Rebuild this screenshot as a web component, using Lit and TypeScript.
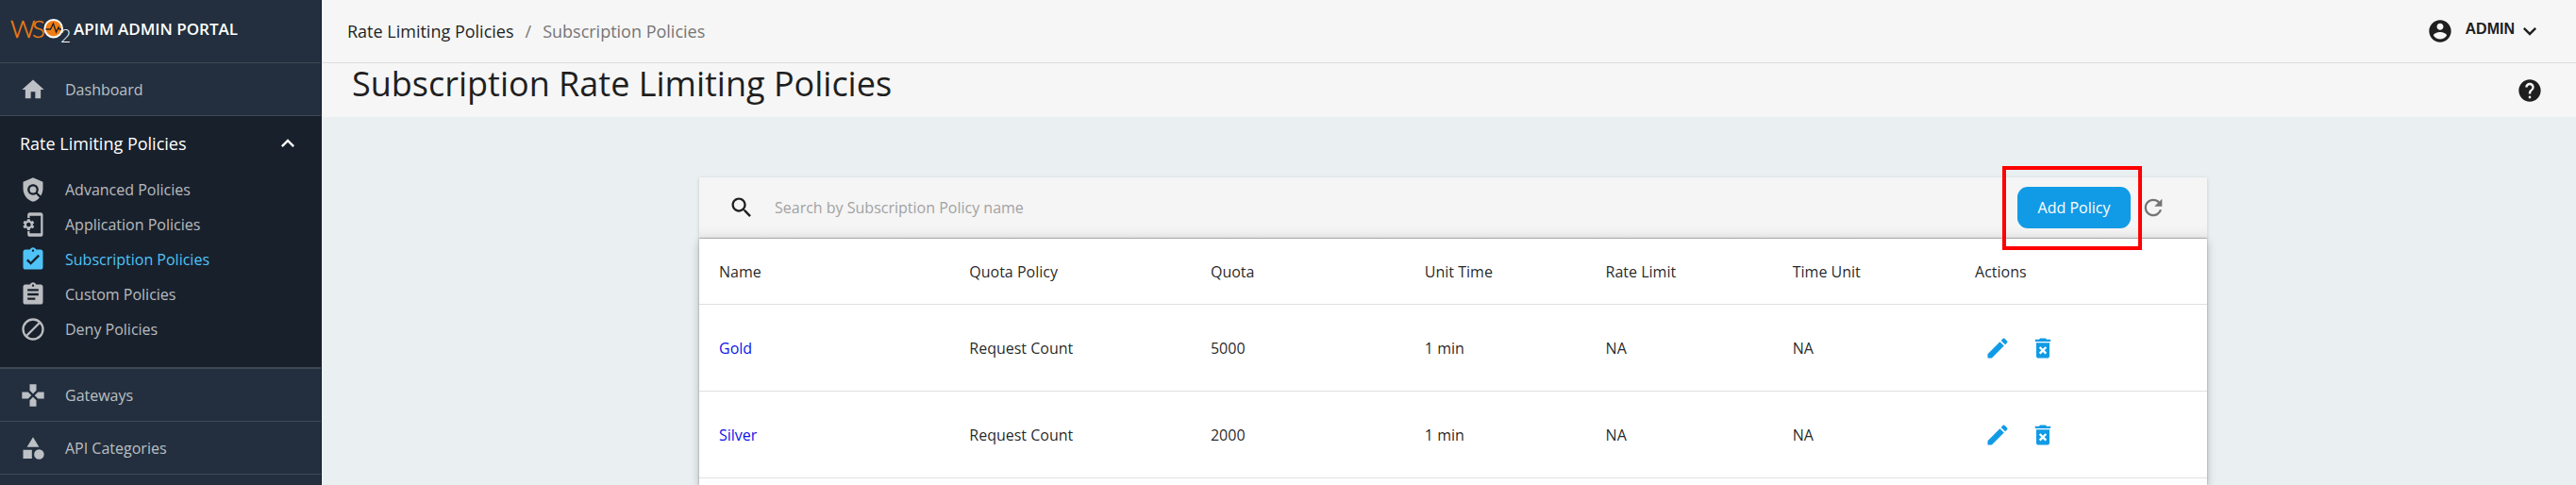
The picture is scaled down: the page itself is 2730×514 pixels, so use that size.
import { LitElement, html, css, svg } from "lit";
import { customElement } from "lit/decorators.js";
import { classMap } from "lit/directives/class-map.js";

const paths = {
  home: svg`<path d="M10 20v-6h4v6h5v-8h3L12 3 2 12h3v8z"/>`,
  policy: svg`<path d="M21 5l-9-4-9 4v6c0 5.55 3.84 10.74 9 12 2.3-.56 4.33-1.9 5.88-3.71l-3.12-3.12c-1.94 1.29-4.58 1.07-6.29-.64-1.95-1.95-1.95-5.12 0-7.07 1.95-1.95 5.12-1.95 7.07 0 1.71 1.71 1.92 4.35.64 6.29l2.9 2.9C20.29 15.69 21 13.38 21 11V5z"/><circle cx="12" cy="12" r="3"/>`,
  setup: svg`<path d="M11.8 12.5v-1l1.1-.8c.1-.1.1-.2.1-.3l-1-1.7c-.1-.1-.2-.2-.3-.1l-1.3.4c-.3-.2-.6-.4-.9-.5l-.2-1.3c0-.1-.1-.2-.3-.2H7c-.1 0-.2.1-.3.3l-.2 1.3c-.3.1-.6.3-.9.5l-1.3-.5c-.1 0-.2 0-.3.1l-1 1.7c-.1.1 0 .2.1.3l1.1.8v1l-1.1.8c-.1.2-.1.3-.1.4l1 1.7c.1.1.2.2.3.1l1.4-.4c.3.2.6.4.9.5l.2 1.3c-.1.1.1.2.2.2h2c.1 0 .2-.1.3-.3l.2-1.3c.3-.1.6-.3.9-.5l1.3.5c.1 0 .2 0 .3-.1l1-1.7c.1-.1 0-.2-.1-.3l-1.1-.9zM8 14c-1.1 0-2-.9-2-2s.9-2 2-2 2 .9 2 2-.9 2-2 2zM19 1H9c-1.1 0-2 .9-2 2v3h2V4h10v16H9v-2H7v3c0 1.1.9 2 2 2h10c1.1 0 2-.9 2-2V3c0-1.1-.9-2-2-2z"/>`,
  assignmentDone: svg`<path d="M19 3h-4.18C14.4 1.84 13.3 1 12 1c-1.3 0-2.4.84-2.82 2H5c-1.1 0-2 .9-2 2v14c0 1.1.9 2 2 2h14c1.1 0 2-.9 2-2V5c0-1.1-.9-2-2-2zm-7 0c.55 0 1 .45 1 1s-.45 1-1 1-1-.45-1-1 .45-1 1-1zm-2 14l-4-4 1.41-1.41L10 14.17l6.59-6.59L18 9l-8 8z"/>`,
  assignment: svg`<path d="M19 3h-4.18C14.4 1.84 13.3 1 12 1c-1.3 0-2.4.84-2.82 2H5c-1.1 0-2 .9-2 2v14c0 1.1.9 2 2 2h14c1.1 0 2-.9 2-2V5c0-1.1-.9-2-2-2zm-7 0c.55 0 1 .45 1 1s-.45 1-1 1-1-.45-1-1 .45-1 1-1zm2 14H7v-2h7v2zm3-4H7v-2h10v2zm0-4H7V7h10v2z"/>`,
  deny: svg`<path d="M6.4 17.6L17.6 6.4" fill="none" stroke="currentColor" stroke-width="2"/><circle cx="12" cy="12" r="9" fill="none" stroke="currentColor" stroke-width="2"/>`,
  gamepad: svg`<path d="M15 7.5V2H9v5.5l3 3 3-3zM7.5 9H2v6h5.5l3-3-3-3zM9 16.5V22h6v-5.5l-3-3-3 3zM16.5 9l-3 3 3 3H22V9h-5.5z"/>`,
  category: svg`<path d="M12 2l-5.5 9h11zM3 13.5h8v8H3z"/><circle cx="17.5" cy="17.5" r="4.5"/>`,
  expandLess: svg`<path d="M12 8l-6 6 1.41 1.41L12 10.83l4.59 4.58L18 14z"/>`,
  expandMore: svg`<path d="M16.59 8.59L12 13.17 7.41 8.59 6 10l6 6 6-6z"/>`,
  account: svg`<path d="M12 2C6.48 2 2 6.48 2 12s4.48 10 10 10 10-4.48 10-10S17.52 2 12 2zm0 3c1.66 0 3 1.34 3 3s-1.34 3-3 3-3-1.34-3-3 1.34-3 3-3zm0 14.2c-2.5 0-4.71-1.28-6-3.22.03-1.99 4-3.08 6-3.08 1.99 0 5.97 1.09 6 3.08-1.29 1.94-3.5 3.22-6 3.22z"/>`,
  help: svg`<path d="M12 2C6.48 2 2 6.48 2 12s4.48 10 10 10 10-4.48 10-10S17.52 2 12 2zm1 17h-2v-2h2v2zm2.07-7.75l-.9.92C13.45 12.9 13 13.5 13 15h-2v-.5c0-1.1.45-2.1 1.17-2.83l1.24-1.26c.37-.36.59-.86.59-1.41 0-1.1-.9-2-2-2s-2 .9-2 2H8c0-2.21 1.79-4 4-4s4 1.79 4 4c0 .88-.36 1.68-.93 2.25z"/>`,
  search: svg`<path d="M15.5 14h-.79l-.28-.27C15.41 12.59 16 11.11 16 9.5 16 5.91 13.09 3 9.5 3S3 5.91 3 9.5 5.91 16 9.5 16c1.61 0 3.09-.59 4.23-1.57l.27.28v.79l5 4.99L20.49 19l-4.99-5zm-6 0C7.01 14 5 11.99 5 9.5S7.01 5 9.5 5 14 7.01 14 9.5 11.99 14 9.5 14z"/>`,
  refresh: svg`<path d="M17.65 6.35C16.2 4.9 14.21 4 12 4c-4.42 0-7.99 3.58-7.99 8s3.57 8 7.99 8c3.73 0 6.84-2.55 7.73-6h-2.08c-.82 2.33-3.04 4-5.65 4-3.31 0-6-2.69-6-6s2.69-6 6-6c1.66 0 3.14.69 4.22 1.78L13 11h7V4l-2.35 2.35z"/>`,
  edit: svg`<path d="M3 17.25V21h3.75L17.81 9.94l-3.75-3.75L3 17.25zM20.71 7.04c.39-.39.39-1.02 0-1.41l-2.34-2.34c-.39-.39-1.02-.39-1.41 0l-1.83 1.83 3.75 3.75 1.83-1.83z"/>`,
  remove: svg`<path d="M6 19c0 1.1.9 2 2 2h8c1.1 0 2-.9 2-2V7H6v12zm2.46-7.12l1.41-1.41L12 12.59l2.12-2.12 1.41 1.41L13.41 14l2.12 2.12-1.41 1.41L12 15.41l-2.12 2.12-1.41-1.41L10.59 14l-2.13-2.12zM15.5 4l-1-1h-5l-1 1H5v2h14V4z"/>`,
};

type IconName = keyof typeof paths;

const icon = (name: IconName) =>
  html`<svg class="icon" viewBox="0 0 24 24" aria-hidden="true">${paths[name]}</svg>`;

const shared = css`
  :host {
    box-sizing: border-box;
    font-family: "Open Sans", "Noto Sans", sans-serif;
    font-size: 16px;
    line-height: 24px;
  }
  *,
  *::before,
  *::after {
    box-sizing: border-box;
  }
  a {
    color: inherit;
    text-decoration: none;
  }
  button {
    margin: 0;
    padding: 0;
    border: 0;
    background: none;
    color: inherit;
    font: inherit;
    cursor: pointer;
  }
  .icon {
    display: block;
    flex: none;
    width: 28px;
    height: 28px;
    fill: currentColor;
  }
`;

interface NavItem {
  label: string;
  icon: IconName;
  active?: boolean;
}

@customElement("side-nav")
class SideNav extends LitElement {
  static styles = [
    shared,
    css`
      :host {
        display: block;
        background: #232f3e;
        border-right: 1px solid #18202c;
        color: rgba(255, 255, 255, 0.7);
      }
      .brand {
        display: flex;
        align-items: center;
        height: 67px;
        padding: 0 8px 4px;
        border-bottom: 1px solid #404854;
        color: #fff;
        font-size: 17px;
        font-weight: 600;
      }
      .logo {
        flex: none;
        width: 70px;
        height: 40px;
        font-family: Lato, sans-serif;
        font-weight: 300;
      }
      .item {
        display: flex;
        align-items: center;
        gap: 20px;
        height: 56px;
        padding: 0 21px;
        border-bottom: 1px solid #404854;
      }
      .group {
        padding-bottom: 22px;
        background: #18202c;
        border-bottom: 2px solid #404854;
      }
      .group-head {
        display: flex;
        align-items: center;
        justify-content: space-between;
        width: 100%;
        height: 59px;
        padding: 0 21px 2px;
        color: #fff;
        font-size: 18px;
      }
      .group .item {
        height: 37px;
        border: 0;
      }
      .group .active {
        color: #4fc3f7;
      }
    `,
  ];

  private policies: NavItem[] = [
    { label: "Advanced Policies", icon: "policy" },
    { label: "Application Policies", icon: "setup" },
    { label: "Subscription Policies", icon: "assignmentDone", active: true },
    { label: "Custom Policies", icon: "assignment" },
    { label: "Deny Policies", icon: "deny" },
  ];

  private item(entry: NavItem) {
    return html`<a
      class=${classMap({ item: true, active: !!entry.active })}
      href="#"
      >${icon(entry.icon)}<span>${entry.label}</span></a
    >`;
  }

  render() {
    return html`
      <a class="brand" href="#">
        <svg class="logo" viewBox="-3 -6 70 40" role="img" aria-label="WSO2">
          <g fill="#f07d14" stroke="#f07d14" stroke-width="0.4" font-size="26">
            <text x="0" y="23">W</text>
            <text x="23" y="23">S</text>
          </g>
          <circle cx="45.7" cy="13.2" r="9.3" fill="#f07d14" stroke="#fff" stroke-width="2" />
          <path
            d="M37.5 14h5l3-6 3 9 2.5-5 1 2h2"
            fill="none"
            stroke="#18202c"
            stroke-width="1.3"
          />
          <text x="53" y="28" font-size="19" fill="#fff">2</text>
        </svg>
        <span>APIM ADMIN PORTAL</span>
      </a>
      <nav>
        ${this.item({ label: "Dashboard", icon: "home" })}
        <div class="group">
          <button class="group-head" aria-expanded="true">
            <span>Rate Limiting Policies</span>${icon("expandLess")}
          </button>
          ${this.policies.map((p) => this.item(p))}
        </div>
        ${this.item({ label: "Gateways", icon: "gamepad" })}
        ${this.item({ label: "API Categories", icon: "category" })}
      </nav>
    `;
  }
}

@customElement("policy-list")
class PolicyList extends LitElement {
  static styles = [
    shared,
    css`
      :host {
        display: flex;
        flex-direction: column;
        color: rgba(0, 0, 0, 0.87);
      }
      .toolbar {
        display: flex;
        align-items: center;
        height: 65px;
        padding: 0 43px 0 31px;
        background: linear-gradient(#f5f5f5 80%, #ececec);
        border-bottom: 1px solid #c8c8c8;
        box-shadow: 0 1px 4px rgba(0, 0, 0, 0.16);
      }
      .search {
        display: flex;
        flex: 1;
        align-items: center;
        gap: 21px;
      }
      .search input {
        flex: 1;
        min-width: 0;
        padding: 0;
        border: 0;
        outline: 0;
        background: none;
        color: inherit;
        font: inherit;
      }
      .search input::placeholder {
        color: #a2a2a2;
        opacity: 1;
      }
      .add-wrap {
        position: relative;
        z-index: 1;
        margin-right: 10px;
      }
      .add {
        display: block;
        min-width: 120px;
        height: 44px;
        padding: 0 20px;
        border-radius: 11px;
        background: #119be6;
        color: #fff;
      }
      .highlight {
        position: absolute;
        inset: -22px -12px -23px -16px;
        border: 4px solid #f00;
        pointer-events: none;
      }
      .refresh {
        color: #757575;
      }
      .paper {
        flex: 1;
        background: #fff;
        box-shadow: 0 0 2px rgba(0, 0, 0, 0.3), 0 3px 9px rgba(0, 0, 0, 0.24);
      }
      table {
        width: 100%;
        border-collapse: separate;
        border-spacing: 0;
        table-layout: fixed;
      }
      th,
      td {
        padding: 0 20px 0 21px;
        border-bottom: 1px solid #e0e0e0;
        font-weight: 400;
        text-align: left;
      }
      th {
        height: 70px;
      }
      td {
        height: 92px;
      }
      td a {
        color: #0d14e8;
      }
      .c1 { width: 16.6%; }
      .c2 { width: 16%; }
      .c3 { width: 14.2%; }
      .c4 { width: 12%; }
      .c5 { width: 12.4%; }
      .c6 { width: 12.1%; }
      .actions {
        display: flex;
        color: #119be6;
      }
      .actions button {
        padding: 10px;
      }
    `,
  ];

  private columns = [
    "Name",
    "Quota Policy",
    "Quota",
    "Unit Time",
    "Rate Limit",
    "Time Unit",
    "Actions",
  ];

  private rows = [
    ["Gold", "Request Count", "5000", "1 min", "NA", "NA"],
    ["Silver", "Request Count", "2000", "1 min", "NA", "NA"],
  ];

  render() {
    return html`
      <div class="toolbar">
        <label class="search">
          ${icon("search")}
          <input
            type="text"
            aria-label="Search by Subscription Policy name"
            placeholder="Search by Subscription Policy name"
          />
        </label>
        <div class="add-wrap">
          <button class="add">Add Policy</button>
          <div class="highlight"></div>
        </div>
        <button class="refresh" aria-label="Refresh">${icon("refresh")}</button>
      </div>
      <div class="paper">
        <table>
          <colgroup>
            ${this.columns.map((_, i) => html`<col class="c${i + 1}" />`)}
          </colgroup>
          <thead>
            <tr>
              ${this.columns.map((c) => html`<th scope="col">${c}</th>`)}
            </tr>
          </thead>
          <tbody>
            ${this.rows.map(
              ([name, ...rest]) => html`<tr>
                <td><a href="#">${name}</a></td>
                ${rest.map((v) => html`<td>${v}</td>`)}
                <td>
                  <div class="actions">
                    <button aria-label="Edit ${name}">${icon("edit")}</button>
                    <button aria-label="Delete ${name}">${icon("remove")}</button>
                  </div>
                </td>
              </tr>`
            )}
          </tbody>
        </table>
      </div>
    `;
  }
}

@customElement("app-root")
class AppRoot extends LitElement {
  static styles = [
    shared,
    css`
      :host {
        display: grid;
        grid-template-columns: 341px 1fr;
        min-height: 100vh;
        background: #eaeff1;
        color: #1f1f1f;
      }
      .page {
        display: flex;
        flex-direction: column;
        min-width: 0;
      }
      .topbar {
        display: flex;
        align-items: center;
        justify-content: space-between;
        height: 67px;
        padding: 0 35px 0 27px;
        background: #f6f6f6;
        border-bottom: 1px solid #dcdcdc;
      }
      .crumbs {
        display: flex;
        gap: 12px;
        color: #757575;
        font-size: 18px;
      }
      .crumbs a {
        color: #1f1f1f;
      }
      .user {
        display: flex;
        align-items: flex-start;
        font-family: "Liberation Sans", Arial, sans-serif;
        font-weight: 700;
      }
      .user span {
        margin: 0 2px 0 13px;
      }
      .titlebar {
        display: flex;
        align-items: center;
        justify-content: space-between;
        height: 57px;
        padding: 0 35px 0 32px;
        background: #f6f6f6;
      }
      h1 {
        align-self: flex-start;
        margin: 0;
        font-size: 36px;
        font-weight: 400;
        line-height: 44px;
      }
      .content {
        display: grid;
        flex: 1;
        grid-template-columns: 400fr 1598fr 391fr;
        padding-top: 64px;
        overflow: hidden;
      }
      .content policy-list {
        grid-column: 2;
      }
    `,
  ];

  render() {
    return html`
      <side-nav></side-nav>
      <div class="page">
        <header class="topbar">
          <nav class="crumbs" aria-label="Breadcrumb">
            <a href="#">Rate Limiting Policies</a>
            <span>/</span>
            <span>Subscription Policies</span>
          </nav>
          <button class="user">
            ${icon("account")}<span>ADMIN</span>${icon("expandMore")}
          </button>
        </header>
        <div class="titlebar">
          <h1>Subscription Rate Limiting Policies</h1>
          <button aria-label="Help">${icon("help")}</button>
        </div>
        <main class="content"><policy-list></policy-list></main>
      </div>
    `;
  }
}
